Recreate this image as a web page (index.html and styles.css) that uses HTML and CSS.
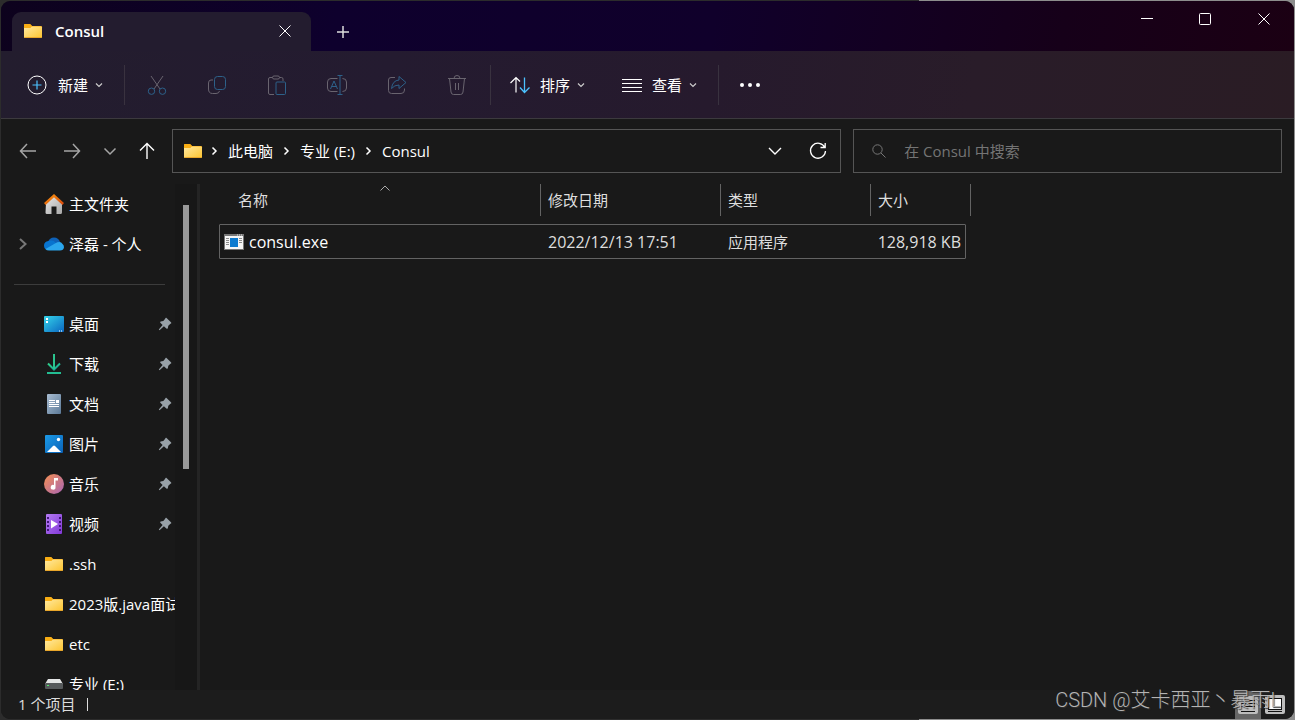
FILE: index.html
```html
<!DOCTYPE html>
<html lang="zh-CN">
<head>
<meta charset="utf-8">
<title>Consul</title>
<link rel="stylesheet" href="styles.css">
</head>
<body>
<svg class="defs" aria-hidden="true">
  <defs>
    <linearGradient id="gFolder" x1="0" y1="0" x2="1" y2="1"><stop offset="0" stop-color="#ffe9a0"/><stop offset="1" stop-color="#fdc42f"/></linearGradient>
    <linearGradient id="gRoof" x1="0" y1="0" x2="1" y2="1"><stop offset="0" stop-color="#f9920f"/><stop offset="1" stop-color="#d94a0c"/></linearGradient>
    <linearGradient id="gWall" x1="0" y1="0" x2="1" y2="1"><stop offset="0" stop-color="#e8e8e8"/><stop offset="1" stop-color="#a8a8a8"/></linearGradient>
    <linearGradient id="gDesk" x1="0" y1="0" x2="1" y2="1"><stop offset="0" stop-color="#35d4ea"/><stop offset="1" stop-color="#0a66c0"/></linearGradient>
    <linearGradient id="gDown" x1="0" y1="0" x2="1" y2="1"><stop offset="0" stop-color="#30d08a"/><stop offset="1" stop-color="#12a39a"/></linearGradient>
    <linearGradient id="gDoc" x1="0" y1="0" x2="1" y2="1"><stop offset="0" stop-color="#a9bdd2"/><stop offset="1" stop-color="#5c7a98"/></linearGradient>
    <linearGradient id="gPic" x1="0" y1="0" x2="1" y2="1"><stop offset="0" stop-color="#1c9ae6"/><stop offset="1" stop-color="#0a62b8"/></linearGradient>
    <linearGradient id="gMusic" x1="0" y1="0" x2="1" y2="1"><stop offset="0" stop-color="#f59052"/><stop offset="1" stop-color="#a764b4"/></linearGradient>
    <linearGradient id="gVideo" x1="0" y1="0" x2="1" y2="1"><stop offset="0" stop-color="#b47cf2"/><stop offset="1" stop-color="#8238d8"/></linearGradient>
    <symbol id="folder" viewBox="0 0 20 20"><path d="M1 4.5Q1 3 2 3H7L9 5H18Q19 5 19 6V8H1Z" fill="#f9ab12"/><rect x="1" y="5.5" width="18" height="11.5" rx="1" fill="url(#gFolder)"/><path d="M1 5.500V3.600Q1 3 2 3H7L9 5 7.500 7H1Z" fill="#f9ae14"/><path d="M1.500 16.500H18.500" stroke="#e9a62a"/></symbol>
    <symbol id="pin" viewBox="0 0 14 14"><path d="M8.300.8 13.200 5.400Q13.600 6.600 12.400 6.700L10.300 8.700 9.800 11.200Q9.200 12.200 8.400 11.600L5.900 9.300 1.500 13.200.8 12.500 4.600 8 2.300 5.800Q1.800 4.900 2.700 4.500L5.300 4 7.200 1.800Q7.400.5 8.300.8Z" fill="#98a1a8"/></symbol>
    <symbol id="down" viewBox="0 0 8 8"><path d="M1 2.500 4 5.500 7 2.500" fill="none" stroke="currentColor" stroke-width="1.200"/></symbol>
    <symbol id="right" viewBox="0 0 8 10"><path d="M2.500 1.500 6 5 2.500 8.500" fill="none" stroke="currentColor" stroke-width="1.500"/></symbol>
  </defs>
</svg>
<div class="window">
  <header class="titlebar">
    <div class="tab">
      <svg class="i20"><use href="#folder"/></svg>
      <span class="tab-title">Consul</span>
      <button class="tab-close" aria-label="关闭标签页"><svg class="i14" viewBox="0 0 14 14"><path d="M1.500 1.500 12.500 12.500M12.500 1.500 1.500 12.500"/></svg></button>
    </div>
    <button class="new-tab" aria-label="新建标签页"><svg class="i14" viewBox="0 0 14 14"><path d="M7 1V13M1 7H13" stroke-width="1.500"/></svg></button>
    <div class="caption">
      <button aria-label="最小化"><svg class="i14" viewBox="0 0 14 14"><path d="M1 6.500H13"/></svg></button>
      <button aria-label="最大化"><svg class="i14" viewBox="0 0 14 14"><rect x="1.500" y="1.500" width="11" height="11" rx="1"/></svg></button>
      <button aria-label="关闭"><svg class="i14" viewBox="0 0 14 14"><path d="M1.500 1.500 12.500 12.500M12.500 1.500 1.500 12.500"/></svg></button>
    </div>
  </header>

  <div class="toolbar" role="toolbar">
    <button class="command new"><svg class="i20" viewBox="0 0 20 20"><circle cx="10" cy="10" r="9"/><path d="M10 5.500V14.500M5.500 10H14.500" stroke="#4cc2ff" stroke-width="1.200"/></svg>新建<svg class="i8"><use href="#down"/></svg></button>
    <span class="rule"></span>
    <div class="tools">
      <button aria-label="剪切" disabled><svg class="i20" viewBox="0 0 20 20"><path d="M4 1 13 14M16 1 7 14"/><g class="blue"><circle cx="4.500" cy="16.200" r="3.200"/><circle cx="15.500" cy="16.200" r="3.200"/></g></svg></button>
      <button aria-label="复制" disabled><svg class="i20" viewBox="0 0 20 20"><path d="M6 5H4Q1.500 5 1.500 8V14Q1.500 18.500 5.500 18.500H9Q12 18.500 12.500 16"/><rect class="blue" x="7.500" y="1.500" width="11" height="13" rx="3"/></svg></button>
      <button aria-label="粘贴" disabled><svg class="i20" viewBox="0 0 20 20"><path d="M5.500 2.500H3Q1.500 2.500 1.500 4V18Q1.500 19.500 3 19.500H7M12.500 2.500H14.500Q16 2.500 16 4V6"/><rect x="5.500" y="1" width="7" height="3" rx="1.500"/><rect class="blue" x="9" y="7" width="9.500" height="12.500" rx="1"/></svg></button>
      <button aria-label="重命名" disabled><svg class="i20" viewBox="0 0 20 20"><path d="M10.500 3.500H4Q.5 3.500.5 7V13Q.5 16.500 4 16.500H10.500M15.500 3.500Q19.500 3.500 19.500 7V13Q19.500 16.500 15.500 16.500"/><path class="blue" d="M3.500 14 7 6 10.500 14M4.800 11.500H9.200M13 .5V19.500M10.500.5H15.500M10.500 19.500H15.500"/></svg></button>
      <button aria-label="共享" disabled><svg class="i20" viewBox="0 0 20 20"><path d="M8 2.500H4Q1.500 2.500 1.500 5V15.500Q1.500 18.500 4.500 18.500H14Q17.500 18.500 17.500 15V13.500"/><path class="blue" d="M12 1.500 19 7.500 12 13.500V10Q7.500 10 4.500 13.500 5.500 5.500 12 5Z" stroke-linejoin="round"/></svg></button>
      <button aria-label="删除" disabled><svg class="i20" viewBox="0 0 20 20"><path d="M1 3.500H19M7 3.500Q7 .5 10 .5T13 3.500M2.500 3.500 4 17Q4.300 19.500 6.500 19.500H13.500Q15.700 19.500 16 17L17.500 3.500M8.500 8V15M11.500 8V15"/></svg></button>
    </div>
    <span class="rule"></span>
    <button class="command sort"><svg class="i20" viewBox="0 0 20 20"><path d="M6 17.500V2.500M.5 8 6 2.500 10 6.500" stroke-width="1.200"/><path d="M14.500 2.500V17.500M10 12.500 14.500 17.500 19.500 12.500" stroke="#4cc2ff" stroke-width="1.300"/></svg>排序<svg class="i8"><use href="#down"/></svg></button>
    <button class="command"><svg class="i20" viewBox="0 0 20 20"><path d="M0 4.500H20M0 8.500H20M0 12.500H20M0 16.500H20"/></svg>查看<svg class="i8"><use href="#down"/></svg></button>
    <span class="rule view-rule"></span>
    <button class="more" aria-label="查看更多"><svg class="i20" viewBox="0 0 20 20"><g fill="#fff" stroke="none"><circle cx="2" cy="10" r="2"/><circle cx="10" cy="10" r="2"/><circle cx="18" cy="10" r="2"/></g></svg></button>
  </div>

  <nav class="navbar">
    <div class="history">
      <button class="dim" aria-label="后退"><svg class="i20" viewBox="0 0 20 20"><path d="M18 10H2.500M9 3 2.500 10 9 17" stroke-width="1.500"/></svg></button>
      <button class="dim" aria-label="前进"><svg class="i20" viewBox="0 0 20 20"><path d="M2 10H17.500M11 3 17.500 10 11 17" stroke-width="1.500"/></svg></button>
      <button class="dim recent" aria-label="最近"><svg class="i14" viewBox="0 0 14 14"><path d="M1.500 4.500 7 10 12.500 4.500" stroke-width="1.500"/></svg></button>
      <button aria-label="向上"><svg class="i20" viewBox="0 0 20 20"><path d="M10 18V2.500M3 9.500 10 2.500 17 9.500" stroke-width="1.400"/></svg></button>
    </div>
    <div class="address">
      <svg class="i20 place"><use href="#folder"/></svg>
      <svg class="crumb-arrow"><use href="#right"/></svg>
      <a href="#pc">此电脑</a>
      <svg class="crumb-arrow"><use href="#right"/></svg>
      <a href="#e">专业 (E:)</a>
      <svg class="crumb-arrow"><use href="#right"/></svg>
      <a href="#consul">Consul</a>
      <button class="drop" aria-label="以前的位置"><svg class="i14" viewBox="0 0 14 14"><path d="M1 4 7 10 13 4" stroke-width="1.400"/></svg></button>
      <button aria-label="刷新"><svg class="i20" viewBox="0 0 20 20"><path d="M16.800 6.500A7.500 7.500 0 1 0 17.500 10M17.200 2V6.500H12.500" stroke-width="1.300"/></svg></button>
    </div>
    <label class="search">
      <svg class="i14" viewBox="0 0 14 14"><circle cx="5.500" cy="5.500" r="4.700"/><path d="M9 9 13.500 13.500"/></svg>
      <input type="text" placeholder="在 Consul 中搜索" aria-label="搜索">
    </label>
  </nav>

  <div class="content">
    <aside class="sidebar">
      <ul class="tree">
        <li><svg class="i20" viewBox="0 0 20 20"><path d="M2 9 10 2 18 9V18.500Q18 20 16.500 20H12.500V12.500H7.500V20H3Q1.500 20 1.500 18.500Z" fill="url(#gWall)"/><path d="M.8 10 10 1.700 19.200 10" fill="none" stroke="url(#gRoof)" stroke-width="2.400"/></svg><a href="#home">主文件夹</a></li>
        <li><svg class="expand" viewBox="0 0 10 12"><path d="M2 1 7.500 6 2 11" stroke-width="2"/></svg><svg class="i20" viewBox="0 0 20 20"><path d="M4 8Q5.500 3.500 10 3.500T16 8L18 14H4Z" fill="#0f62b8"/><path d="M4.500 7Q9 5.500 12 9L14 16H5Q0 16 0 11.500 0 7.500 4.500 7Z" fill="#0874cf"/><path d="M1.500 15 11 9.500Q16.500 6.500 18.500 10 20 11 20 13.200 19.500 16.500 16 16.500H5Q2.500 16.500 1.500 15Z" fill="#2ba6ed"/></svg><a href="#onedrive">泽磊 - 个人</a></li>
      </ul>
      <hr>
      <ul class="tree">
        <li><svg class="i20" viewBox="0 0 20 20"><rect y="2" width="20" height="16" rx="1" fill="url(#gDesk)"/><path d="M2 4H4V6H2ZM2 7H4V9H2ZM15 16.500H16V17.500H15ZM17 16.500H18V17.500H17Z" fill="#fff"/></svg><a href="#desktop">桌面</a><svg class="pin"><use href="#pin"/></svg></li>
        <li><svg class="i20" viewBox="0 0 20 20"><path d="M4 9.500 10 15.500 16 9.500" fill="none" stroke="url(#gDown)" stroke-width="2"/><rect x="3" y="18" width="14" height="2" fill="#23bd92"/><rect x="9" y="0" width="2" height="15" fill="#2bc48e"/></svg><a href="#downloads">下载</a><svg class="pin"><use href="#pin"/></svg></li>
        <li><svg class="i20" viewBox="0 0 20 20"><rect x="3" width="14" height="20" rx="1" fill="url(#gDoc)"/><path d="M5 6.500H11M5 8.500H11M5 10.500H15M5 12.500H15" stroke="#fff"/><rect x="12" y="6" width="3" height="3" fill="#fff"/></svg><a href="#documents">文档</a><svg class="pin"><use href="#pin"/></svg></li>
        <li><svg class="i20" viewBox="0 0 20 20"><rect x="1" y="1" width="18" height="18" rx="1" fill="url(#gPic)"/><path d="M3 18 9 12Q10 11 11 12L17 18Z" fill="#fff"/><circle cx="14.500" cy="5.500" r="1.700" fill="#fff"/></svg><a href="#pictures">图片</a><svg class="pin"><use href="#pin"/></svg></li>
        <li><svg class="i20" viewBox="0 0 20 20"><circle cx="10" cy="10" r="10" fill="url(#gMusic)"/><path d="M10 4H14V6.500H11.500V13A2.400 2.400 0 1 1 10 11Z" fill="#fff"/></svg><a href="#music">音乐</a><svg class="pin"><use href="#pin"/></svg></li>
        <li><svg class="i20" viewBox="0 0 20 20"><rect x="2" width="16" height="20" rx="1" fill="url(#gVideo)"/><path d="M4 3V18M16 3V18" stroke="#421779" stroke-width="2" stroke-dasharray="2 2"/><path d="M7 6 14 10 7 14.500Z" fill="#fff"/></svg><a href="#videos">视频</a><svg class="pin"><use href="#pin"/></svg></li>
        <li><svg class="i20"><use href="#folder"/></svg><a href="#ssh">.ssh</a></li>
        <li><svg class="i20"><use href="#folder"/></svg><a href="#java">2023版.java面试</a></li>
        <li><svg class="i20"><use href="#folder"/></svg><a href="#etc">etc</a></li>
        <li><svg class="i20" viewBox="0 0 20 20"><path d="M4 5H16L19 10H1Z" fill="#e4e6e6"/><rect x="1" y="9" width="18" height="6" rx="1" fill="#565a5c"/><rect x="3" y="11" width="2" height="1" fill="#51e86a"/></svg><a href="#drive">专业 (E:)</a></li>
      </ul>
      <div class="scrollbar"><div class="thumb"></div></div>
    </aside>
    <main class="files">
      <table>
        <thead>
          <tr>
            <th class="name">名称<svg class="sorted" viewBox="0 0 10 6"><path d="M.5 5.500 5 1 9.500 5.500"/></svg></th>
            <th class="date">修改日期</th><th class="type">类型</th><th class="size">大小</th>
          </tr>
        </thead>
        <tbody>
          <tr>
            <td class="name"><svg class="i20" viewBox="0 0 20 20"><rect y="2" width="20" height="16" fill="#777"/><rect x="1" y="4" width="18" height="13" fill="#f6f6f6"/><rect x="6" y="6" width="8" height="9" fill="#0d7bd0"/><path d="M2 6.500H5M2 8.500H5M2 10.500H5M2 12.500H5M15 6.500H18M15 8.500H18M15 10.500H18" stroke="#8b8b8b"/><path d="M13 3H14M15 3H16M17 3H18" stroke="#ddd"/></svg>consul.exe</td>
            <td class="date">2022/12/13 17:51</td><td class="type">应用程序</td><td class="size">128,918 KB</td>
          </tr>
        </tbody>
      </table>
    </main>
  </div>
  <footer class="status">
    <span class="count">1 个项目</span>
    <div class="views">
      <button class="active" aria-label="详细信息"><svg class="i20" viewBox="0 0 20 20"><rect y="1" width="20" height="18" rx="2" fill="#bdbdbd" stroke="none"/><path d="M3 5.500H17M3 8.500H17M3 11.500H17M3 16.500H17" stroke="#111"/></svg></button>
      <button aria-label="大图标"><svg class="i20" viewBox="0 0 20 20"><rect width="20" height="19" rx="2" fill="#bdbdbd" stroke="none"/><rect x="3.500" y="3.500" width="13" height="11" fill="#fff" stroke="#111"/><path d="M3 16.500H17" stroke="#111"/></svg></button>
    </div>
  </footer>
</div>
<div class="watermark">CSDN @艾卡西亚丶暴雨L</div>
</body>
</html>
```
FILE: styles.css
```css
* { box-sizing: border-box; }

body {
  margin: 0;
  height: 100vh;
  overflow: hidden;
  padding: 1px;
  background: linear-gradient(90deg, #2c2c2c 0 71%, #8d8d8d 71%);
  color: #fff;
  font: 15px/20px "Open Sans", "Noto Sans CJK SC", sans-serif;
}

button {
  display: flex;
  align-items: center;
  justify-content: center;
  padding: 0;
  border: 0;
  background: none;
  color: inherit;
  font: inherit;
}

a { color: inherit; text-decoration: none; white-space: nowrap; }
svg { flex: none; fill: none; stroke: currentColor; }
symbol { stroke: none; }
.defs { position: absolute; width: 0; height: 0; }
.i20 { width: 20px; height: 20px; }
.i14 { width: 14px; height: 14px; }
.i8 { width: 8px; height: 8px; }
use[href="#folder"], use[href="#pin"], .tree .i20, td .i20 { stroke: none; }

.window {
  display: flex;
  flex-direction: column;
  height: 100%;
  overflow: hidden;
  border-radius: 9px;
  background: #191919;
}

/* Title bar */
.titlebar {
  display: flex;
  flex: none;
  height: 50px;
  padding-left: 11px;
  background: linear-gradient(100deg, #0d021d, #0e002d 26%, #10002b 55%, #160019 82%, #1b0013);
}
.tab {
  display: flex;
  align-items: center;
  width: 299px;
  margin-top: 11px;
  padding: 0 16px 2px 11px;
  border-radius: 9px 9px 0 0;
  background: #231c2f;
}
.tab-title { margin-left: 12px; font-weight: 600; font-size: 15px; }
.tab-close { width: 20px; height: 24px; margin-left: auto; }
.new-tab { width: 32px; height: 32px; margin: 15px 0 0 16px; color: #ddd; }
.caption { display: flex; margin-left: auto; }
.caption button { width: 58px; height: 36px; }
.caption button:last-child { width: 60px; }

/* Command bar */
.toolbar {
  display: flex;
  flex: none;
  align-items: center;
  height: 68px;
  border-bottom: 1px solid #3c3a3e;
  background: linear-gradient(100deg, #231d2e, #241b30 30%, #261a2d 55%, #291c29 75%, #2a1c24);
}
.command { gap: 10px; height: 40px; }
.command .i8 { margin-left: -3px; color: #ccc; }
.new { gap: 11px; margin-left: 26px; }
.new .i8 { margin-left: -4px; }
.rule { width: 1px; height: 40px; background: #39323f; }
.new + .rule { margin-left: 21px; }
.tools { display: flex; gap: 20px; padding: 0 13px 0 12px; }
.tools button { width: 40px; height: 40px; color: #69646f; }
.blue { stroke: #2d6189; }
.sort { margin: 0 37px 0 19px; }
.view-rule { margin-left: 21px; }
.more { width: 40px; height: 40px; margin-left: 11px; }

/* Navigation bar */
.navbar {
  display: flex;
  flex: none;
  align-items: center;
  gap: 12px;
  padding: 10px 12px 11px 17px;
}
.history { display: flex; align-items: center; gap: 24px; margin-right: 4px; }
.history .dim { color: #a5a5a5; }
.recent { width: 14px; margin: 0 -4px 0 -3px; }
.address, .search {
  display: flex;
  align-items: center;
  height: 44px;
  border: 1px solid #555;
}
.address { flex: 647 1 0; padding: 0 12px 0 10px; margin-left: -1px; }
.place { margin-right: -2px; }
.crumb-arrow { width: 8px; height: 10px; margin: 0 10px 0 9px; }
.drop { width: 20px; margin: 0 23px 0 auto; }
.search { flex: 398 1 0; padding: 0 12px 0 18px; color: #777; }
.search input {
  flex: 1;
  min-width: 0;
  margin-left: 18px;
  padding: 0;
  border: 0;
  outline: 0;
  background: none;
  color: #fff;
  font: inherit;
}
.search input::placeholder { color: #747474; opacity: 1; }

/* Sidebar */
.content { display: flex; flex: 1; min-height: 0; }
.sidebar {
  position: relative;
  flex: none;
  width: 199px;
  overflow: hidden;
  border-right: 3px solid #242424;
}
.tree { width: 174px; margin: 0; padding: 0; list-style: none; }
.tree li {
  position: relative;
  display: flex;
  align-items: center;
  height: 40px;
  padding-left: 43px;
  overflow: hidden;
}
.tree a { margin-left: 5px; }
.expand { position: absolute; left: 17px; width: 10px; height: 12px; color: #777; }
.pin { width: 14px; height: 14px; margin: 0 3px 0 auto; }
.sidebar hr { width: 151px; height: 1px; margin: 20px 0 19px 13px; border: 0; background: #3c3c3c; }
.scrollbar { position: absolute; top: 0; right: 0; bottom: 0; width: 22px; padding: 21px 0 0 8px; background: #171717; }
.thumb { width: 6px; height: 264px; background: #999; }

/* File list */
.files { flex: 1; min-width: 0; padding-left: 19px; }
table, thead, tbody { display: block; }
tr { display: flex; }
th, td { padding: 0 4px 0 7px; text-align: left; font-weight: 400; color: #dedede; white-space: nowrap; }
thead tr { height: 32px; }
th { position: relative; border-right: 1px solid #636363; line-height: 32px; }
.name { width: 322px; }
.date { width: 180px; }
.type { width: 150px; }
.size { width: 100px; }
th.name { padding-left: 19px; }
.sorted { position: absolute; top: 1px; left: 161px; width: 10px; height: 6px; color: #aaa; }
tbody tr {
  width: 747px;
  height: 35px;
  margin-top: 8px;
  border: 1px solid #636363;
  border-radius: 1px;
}
td { line-height: 34px; }
td.name { display: flex; align-items: center; gap: 5px; width: 321px; padding-left: 4px; color: #fff; }
td.name, td.date, td.size { font-size: 16px; }
td.size { width: 94px; padding-left: 0; text-align: right; }

/* Status bar */
.status {
  display: flex;
  flex: none;
  align-items: center;
  height: 29px;
  padding: 0 6px 0 17px;
  background: #1c1c1c;
}
.count { padding-right: 12px; border-right: 1px solid #ddd; color: #ddd; line-height: 13px; }
.views { display: flex; gap: 1px; margin-left: auto; }
.views button { width: 26px; height: 28px; }
.views .active { background: #666; }
.watermark {
  position: absolute;
  right: 14px;
  bottom: 8px;
  color: #b4b4b4;
  font: 300 20px/24px Roboto, "Noto Sans CJK SC", sans-serif;
  text-shadow: 1px 1px 1px #333;
}
```
